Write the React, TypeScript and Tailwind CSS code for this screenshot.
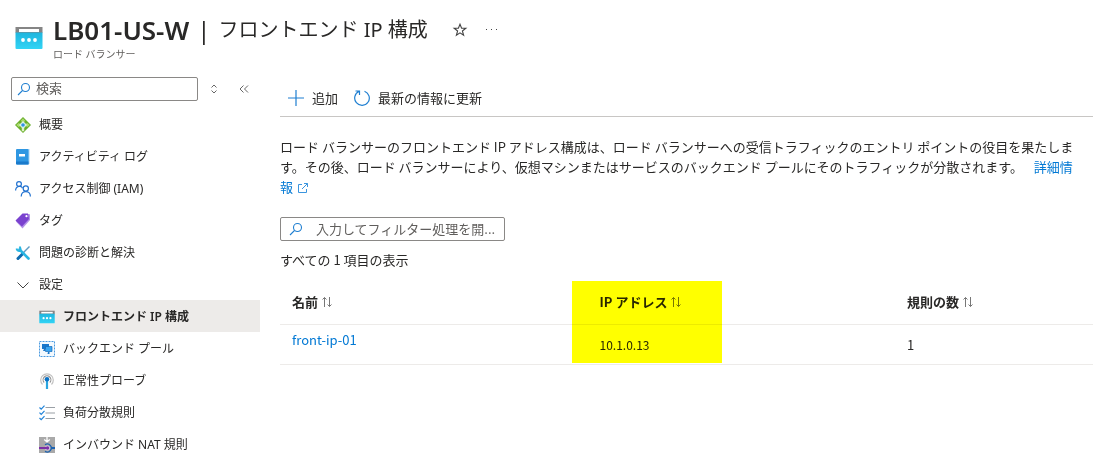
import type { ReactNode } from "react";

function FrontendIcon({ className }: { className: string }) {
  return (
    <svg viewBox="0 0 28 24" className={className} aria-hidden="true">
      <defs>
        <linearGradient id="cyan" x1="0" y1="0" x2="0" y2="1">
          <stop offset="0" stopColor="#1fb5de" />
          <stop offset="1" stopColor="#32d4f5" />
        </linearGradient>
      </defs>
      <path d="M.500 1h27v6H.500z" fill="#858585" />
      <path d="M4 3h20v3H4z" fill="#fff" />
      <path d="M.500 6.500h27V22q0 1-1 1h-25q-1 0-1-1z" fill="url(#cyan)" />
      <circle cx="8" cy="14" r="1.900" fill="#fff" />
      <circle cx="14" cy="14" r="1.900" fill="#fff" />
      <circle cx="20" cy="14" r="1.900" fill="#fff" />
    </svg>
  );
}

function SearchIcon() {
  return (
    <svg viewBox="0 0 16 16" className="size-4 shrink-0" fill="none" stroke="#1f7fd1" strokeWidth="1.100" aria-hidden="true">
      <circle cx="9.500" cy="6.500" r="4" />
      <path d="M6.500 9.500 2 14" />
    </svg>
  );
}

const overview = (
  <svg viewBox="0 0 16 16" className="size-4">
    <path d="M8 0l8 8-8 8-8-8z" fill="#69ae2a" />
    <path d="M8 1.200 10.300 4 8 5.500 5.700 4zM1.200 8 4 5.700 5.500 8 4 10.300zM14.800 8 12 5.700 10.500 8 12 10.300z" fill="#a9da6c" />
    <path d="M6.800 9h2.400v4.500L8 14.800l-1.200-1.300z" fill="#dff2c8" />
    <path d="m8 4 4 4-4 4-4-4z" fill="#dcf0e4" />
    <circle cx="8" cy="8" r="1.800" fill="#2f93e4" />
  </svg>
);

const activity = (
  <svg viewBox="0 0 16 16" className="size-4">
    <path d="M3 0h11.500v15H3z" fill="#a8d3f2" />
    <path d="M2 0h10.500q1 0 1 1v14.500H2q-1 0-1-1V1q0-1 1-1z" fill="#2f97e2" />
    <path d="M1 12.500h12.500v3H2q-1 0-1-1z" fill="#1a7acb" />
    <path d="M4 5h6v2.500H4z" fill="#fff" />
  </svg>
);

const access = (
  <svg viewBox="0 0 16 16" className="size-4" fill="none" stroke="#2272d0" strokeWidth="1.200">
    <circle cx="4" cy="3" r="2.400" />
    <path d="M.600 9.500C.600 4.800 6.500 4.200 7.500 7.200" />
    <circle cx="10.800" cy="7.500" r="2.600" />
    <path d="M6.200 15.500c0-6.600 9.200-6.600 9.200 0" />
  </svg>
);

const tag = (
  <svg viewBox="0 0 16 16" className="size-4">
    <path d="M9 1h5q1 0 1 1v5l-7.500 8.500L1 8.500z" fill="#b392e8" />
    <path d="M7.500.5H13L14 6l-7 7.500L.500 7.500z" fill="#7a42cf" />
    <circle cx="11.500" cy="3.200" r="1.100" fill="#fff" />
  </svg>
);

const diagnose = (
  <svg viewBox="0 0 16 16" className="size-4" fill="none">
    <path d="M14.500 1.500 8 8" stroke="#5f9cc4" strokeWidth="1.400" />
    <path d="M8 8.500 3 13.500" stroke="#0f6cb0" strokeWidth="3" strokeLinecap="round" />
    <path d="M4.500 4.500 13.500 13.500" stroke="#28b5e2" strokeWidth="2.600" strokeLinecap="round" />
    <path d="M1.500 3.500q.5 3 3.500 2.500 1.500-2-.5-4.500" stroke="#28b5e2" strokeWidth="1.800" />
  </svg>
);

const chevron = (
  <svg viewBox="0 0 16 16" className="size-4" fill="none" stroke="#444" strokeWidth="1">
    <path d="m2.500 5.500 5.500 5.500 5.500-5.500" />
  </svg>
);

const pool = (
  <svg viewBox="0 0 16 16" className="size-4">
    <path d="M.5.5h15v15H.5z" fill="#f3f9fe" stroke="#4a9be0" strokeDasharray="2 1" />
    <path d="M3 3h7v5H3z" fill="#1877cb" />
    <path d="M6.500 5.500h6.500v5H6.500z" fill="#38a4f0" stroke="#1468b8" strokeWidth=".700" />
    <path d="M5 8h1v2H4zM9 11h1.500v2h-2z" fill="#1877cb" />
  </svg>
);

const probe = (
  <svg viewBox="0 0 16 16" className="size-4" fill="none">
    <path d="M3.500 11.500a6.300 6.300 0 1 1 9 0" stroke="#c2c2c2" strokeWidth="1.200" />
    <path d="M5.200 9.500a3.900 3.900 0 1 1 5.600 0" stroke="#929292" strokeWidth="1.100" />
    <path d="M8 7v9" stroke="#2ba5df" strokeWidth="2.200" />
    <circle cx="8" cy="6.300" r="2.300" fill="#0b72c4" />
  </svg>
);

const rules = (
  <svg viewBox="0 0 16 16" className="size-4" fill="none">
    <path d="M6.500 2.500H16M6.500 8H16M6.500 13.500H16" stroke="#9aa0a6" strokeWidth="1.200" />
    <path d="m.5 2.500 1.700 1.700L5.500.700M.5 7.700l1.700 1.700 3.300-3.500M.5 13l1.700 1.700 3.300-3.500" stroke="#1f83d8" strokeWidth="1.200" />
  </svg>
);

const nat = (
  <svg viewBox="0 0 16 16" className="size-4" fill="none">
    <path d="M0 0h16v16H0z" fill="#a9a9a9" />
    <path d="M8 0v4.500M5.200 2.500 8 5l2.800-2.500" stroke="#fff" strokeWidth="1.300" />
    <path d="M12 11h4" stroke="#1e63b0" strokeWidth="2" />
    <path d="M6 7.700a4 4 0 1 1 0 6.600" stroke="#1e63b0" strokeWidth="1.300" />
    <circle cx="8.500" cy="11" r="2.500" fill="#d5c7e4" />
    <path d="M0 11h7" stroke="#7b2fa6" strokeWidth="2" />
    <circle cx="8.500" cy="11" r="1.700" fill="#7b2fa6" />
  </svg>
);

type Item = { label: string; icon: ReactNode };

const topItems: Item[] = [
  { label: "概要", icon: overview },
  { label: "アクティビティ ログ", icon: activity },
  { label: "アクセス制御 (IAM)", icon: access },
  { label: "タグ", icon: tag },
  { label: "問題の診断と解決", icon: diagnose },
];

const settingItems: Item[] = [
  { label: "フロントエンド IP 構成", icon: <FrontendIcon className="h-4 w-4" /> },
  { label: "バックエンド プール", icon: pool },
  { label: "正常性プローブ", icon: probe },
  { label: "負荷分散規則", icon: rules },
  { label: "インバウンド NAT 規則", icon: nat },
];

function SortButton({ label }: { label: string }) {
  return (
    <button type="button" className="flex items-center gap-1 font-bold">
      {label}
      <svg viewBox="0 0 10 12" className="h-3 w-[10px]" fill="none" stroke="#777" aria-hidden="true">
        <path d="M2.500 11V1.500M.5 3.500l2-2 2 2M7.500 1v9.500M5.500 8.500l2 2 2-2" />
      </svg>
    </button>
  );
}

export default function App() {
  return (
    <div className="min-h-screen bg-white font-['Noto_Sans','Noto_Sans_CJK_JP',sans-serif] text-[#292827]" lang="ja">
      <header className="flex h-[68px] items-start gap-[10px] pt-4 pl-[15px]">
        <FrontendIcon className="mt-[10px] h-6 w-7 shrink-0" />
        <div>
          <div className="flex h-7 items-center">
            <h1 className="flex items-center whitespace-nowrap leading-7">
              <span className="text-[26px] leading-7 font-semibold">LB01-US-W</span>
              <span className="px-2 text-2xl leading-7">|</span>
              <span className="text-xl leading-7">フロントエンド IP 構成</span>
            </h1>
            <button type="button" aria-label="お気に入り" className="ml-6">
              <svg viewBox="0 0 16 16" className="size-4" fill="none" stroke="#444" strokeWidth="1.100">
                <path d="m8 2.300 1.600 4h4.200l-3.400 2.700 1.200 4.300L8 10.800l-3.600 2.500 1.200-4.300L2.200 6.300h4.200z" />
              </svg>
            </button>
            <button type="button" aria-label="その他" className="ml-4">
              <svg viewBox="0 0 16 16" className="size-4" fill="#444">
                <path d="M2 7h1v1H2zM7 7h1v1H7zM12 7h1v1h-1z" />
              </svg>
            </button>
          </div>
          <p className="text-[10px] leading-5 text-[#605e5c]">ロード バランサー</p>
        </div>
      </header>

      <div className="flex">
        <aside className="w-[260px] shrink-0 text-xs">
          <div className="flex items-center pt-[9px] pb-[7px] pl-[11px]">
            <label className="flex h-6 w-[187px] items-center gap-1 rounded-xs border border-[#8a8886] px-1">
              <SearchIcon />
              <input type="text" aria-label="検索" placeholder="検索" className="w-full min-w-0 text-[13px] outline-none placeholder:text-[#605e5c]" />
            </label>
            <button type="button" aria-label="並べ替え" className="ml-2">
              <svg viewBox="0 0 16 16" className="size-4" fill="none" stroke="#666">
                <path d="m5.500 6.500 2.500-2.500 2.500 2.500M5.500 9.500 8 12l2.500-2.500" />
              </svg>
            </button>
            <button type="button" aria-label="折りたたむ" className="ml-[14px]">
              <svg viewBox="0 0 16 16" className="size-4" fill="none" stroke="#666">
                <path d="M7.500 4.500 4 8l3.500 3.500M12 4.500 8.500 8l3.500 3.500" />
              </svg>
            </button>
          </div>
          <nav>
            {topItems.map((item) => (
              <a key={item.label} href="#" className="flex h-8 items-center gap-2 pt-[2px] pl-[15px]">
                {item.icon}
                {item.label}
              </a>
            ))}
            <button type="button" className="flex h-8 w-full items-center gap-2 pt-[2px] pl-[15px]">
              {chevron}
              設定
            </button>
            {settingItems.map((item, index) => (
              <a
                key={item.label}
                href="#"
                className={
                  index === 0
                    ? "flex h-8 items-center gap-2 bg-[#edebe9] pt-[2px] pl-[39px] font-semibold"
                    : "flex h-8 items-center gap-2 pt-[2px] pl-[39px]"
                }
              >
                {item.icon}
                {item.label}
              </a>
            ))}
          </nav>
        </aside>

        <main className="ml-5 min-w-0 flex-1 font-['Noto_Sans_CJK_JP',sans-serif] text-[13px] leading-5">
          <div className="flex h-[49px] items-center gap-4 border-b border-[#c8c6c4] pt-3 pl-2">
            <button type="button" className="flex items-center gap-2">
              <svg viewBox="0 0 16 16" className="size-4" stroke="#1f7fd1" strokeWidth="1.200">
                <path d="M8 0v16M0 8h16" />
              </svg>
              追加
            </button>
            <button type="button" className="flex items-center gap-2">
              <svg viewBox="0 0 16 16" className="size-4" fill="none" stroke="#1f7fd1" strokeWidth="1.200">
                <path d="M10.500 1.200A7.300 7.300 0 1 1 5 1.400M1.500 1H5.500V5" />
              </svg>
              最新の情報に更新
            </button>
          </div>
          <p className="mt-5 pr-4">
            ロード バランサーのフロントエンド IP アドレス構成は、ロード バランサーへの受信トラフィックのエントリ ポイントの役目を果たします。その後、ロード バランサーにより、仮想マシンまたはサービスのバックエンド プールにそのトラフィックが分散されます。{" "}
            <a href="#" className="ml-2 text-[#0078d4]">
              詳細情報
              <svg viewBox="0 0 12 12" className="ml-1 inline size-3" fill="none" stroke="#3b95de">
                <path d="M5 2.500H1.500v8h8V7M7 1.500h3.500V5M10.500 1.500 5 7" />
              </svg>
            </a>
          </p>
          <label className="mt-5 flex h-6 w-[225px] items-center gap-3 rounded-xs border border-[#8a8886] pl-[7px]">
            <SearchIcon />
            <input
              type="text"
              aria-label="フィルター"
              placeholder="入力してフィルター処理を開..."
              className="w-full min-w-0 outline-none placeholder:text-[#605e5c]"
            />
          </label>
          <p className="mt-[9px]">すべての 1 項目の表示</p>
          <table className="mt-[11px] w-full table-fixed border-collapse text-left">
            <thead>
              <tr className="h-[43px] border-b border-[#edebe9]">
                <th className="pl-3">
                  <SortButton label="名前" />
                </th>
                <th className="relative pl-3">
                  <SortButton label="IP アドレス" />
                  <span className="pointer-events-none absolute top-0 -left-4 h-[82px] w-[150px] bg-[#ffff00] mix-blend-multiply" />
                </th>
                <th className="w-[198px] pl-3">
                  <SortButton label="規則の数" />
                </th>
              </tr>
            </thead>
            <tbody>
              <tr className="h-10 border-b border-[#edebe9]">
                <td className="pb-2 pl-3">
                  <a href="#" className="text-[#0078d4]">front-ip-01</a>
                </td>
                <td className="pt-[2px] pl-3 text-xs">10.1.0.13</td>
                <td className="pt-[2px] pl-3">1</td>
              </tr>
            </tbody>
          </table>
        </main>
      </div>
    </div>
  );
}
